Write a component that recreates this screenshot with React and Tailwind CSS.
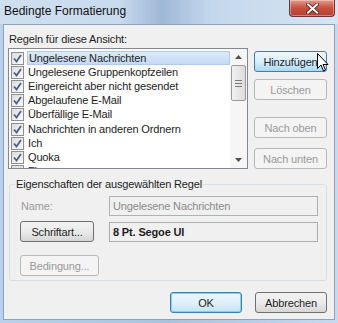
const rules = [
  "Ungelesene Nachrichten",
  "Ungelesene Gruppenkopfzeilen",
  "Eingereicht aber nicht gesendet",
  "Abgelaufene E-Mail",
  "Überfällige E-Mail",
  "Nachrichten in anderen Ordnern",
  "Ich",
  "Quoka",
  "Firma",
];

function Check() {
  return (
    <span className="flex h-[13px] w-[13px] shrink-0 items-center justify-center border border-[#8f8f8f] bg-gradient-to-br from-[#dcdcdc] to-[#fbfbfb]">
      <svg width="9" height="9" viewBox="0 0 9 9">
        <path d="M1 4.5 L3.5 7.5 L8 1" fill="none" stroke="#4d6185" strokeWidth="1.8" />
      </svg>
    </span>
  );
}

function WinButton({ children, disabled, hover, primary, className = "" }) {
  let look =
    "border-[#707070] bg-gradient-to-b from-[#f2f2f2] via-[#ebebeb] to-[#d6d6d6] text-[#1e1e1e]";
  if (disabled) look = "border-[#b5b9bc] bg-[#f4f4f4] text-[#9a9a9a]";
  if (hover)
    look = "border-[#3c7fb1] bg-gradient-to-b from-[#eaf6fd] via-[#d9f0fc] to-[#a7d9f5] text-[#1e1e1e]";
  if (primary)
    look =
      "border-[#3c7fb1] bg-gradient-to-b from-[#eaf6fd] via-[#dff1fb] to-[#c4e4f5] text-[#1e1e1e] shadow-[inset_0_0_0_1px_#7fd2f7]";
  return (
    <div
      className={`flex h-[21px] items-center justify-center rounded-[3px] border ${look} ${className}`}
    >
      {children}
    </div>
  );
}

export default function App() {
  return (
    <div className="relative h-[323px] w-[338px] overflow-hidden bg-gradient-to-r from-[#b9d1ea] via-[#a9c3df] to-[#c6d9ee] font-['Liberation_Sans',Arial,sans-serif] text-[11px] leading-[14px] tracking-[-0.15px] text-[#1e1e1e]">
      {/* title bar */}
      <div className="flex h-[24px] items-start justify-between bg-[linear-gradient(90deg,#cfdff0_0%,#c8dbef_35%,#9fb8d6_48%,#c3d7ec_62%,#d7e5f3_100%)]">
        <span className="pl-[4px] pt-[4px] text-[12px] tracking-normal text-[#111]">Bedingte Formatierung</span>
        <div className="mr-[3px] flex h-[17px] w-[46px] items-center justify-center rounded-b-[4px] border border-t-0 border-[#6d3434] bg-gradient-to-b from-[#e49a8c] via-[#c75040] to-[#b93f2e] shadow-[inset_0_0_0_1px_rgba(255,255,255,0.35)]">
          <svg width="13" height="11" viewBox="0 0 13 11">
            <path d="M2 1.5 L11 9.5 M11 1.5 L2 9.5" stroke="#4a2020" strokeWidth="3.6" strokeLinecap="square" />
            <path d="M2 1.5 L11 9.5 M11 1.5 L2 9.5" stroke="#fff" strokeWidth="2" strokeLinecap="square" />
          </svg>
        </div>
      </div>

      {/* client area */}
      <div className="mx-[3px] flex h-[296px] flex-col border border-[#8da3bd] bg-[#f0f0f0] px-[4px]">
        <div className="pl-[1px] pt-[7px]">Regeln für diese Ansicht:</div>
        <div className="mt-[2px] flex gap-[6px]">
          <div className="flex h-[121px] w-[240px] border border-[#828790] bg-white">
            <div className="flex flex-1 flex-col overflow-hidden pl-[2px] pt-[2px]">
              {rules.map((r, i) => (
                <div key={r} className="flex h-[14.2px] shrink-0 items-center gap-[3px] leading-[13px]">
                  <Check />
                  <span
                    className={`flex h-[14px] flex-1 items-center pl-[1px] ${
                      i === 0 ? "border border-[#aecbee] bg-gradient-to-b from-[#dce9f9] to-[#c4daf5]" : ""
                    }`}
                  >
                    {r}
                  </span>
                </div>
              ))}
            </div>
            {/* scrollbar */}
            <div className="flex w-[17px] flex-col items-center bg-[#f6f6f6] px-[1px]">
              <div className="flex h-[16px] items-center justify-center">
                <svg width="7" height="4" viewBox="0 0 7 4"><path d="M0 4 L3.5 0 L7 4Z" fill="#505050" /></svg>
              </div>
              <div className="flex h-[36px] w-[15px] flex-col items-center justify-center gap-[2px] rounded-[2px] border border-[#9a9a9a] bg-gradient-to-r from-[#f2f2f2] to-[#dcdcdc]">
                <span className="h-px w-[7px] bg-[#7a7a7a]" />
                <span className="h-px w-[7px] bg-[#7a7a7a]" />
                <span className="h-px w-[7px] bg-[#7a7a7a]" />
              </div>
              <div className="flex-1" />
              <div className="flex h-[16px] items-center justify-center">
                <svg width="7" height="4" viewBox="0 0 7 4"><path d="M0 0 L3.5 4 L7 0Z" fill="#505050" /></svg>
              </div>
            </div>
          </div>
          <div className="flex w-[73px] flex-col pt-[3px]">
            <div className="relative">
              <WinButton hover>Hinzufügen</WinButton>
              <svg className="absolute left-[63px] top-[2px]" width="12" height="19" viewBox="0 0 12 19">
                <path d="M0.5 0.5 L0.5 15.5 L4 12 L6.5 18 L8.5 17 L6 11.5 L11 11.5 Z" fill="#fff" stroke="#000" strokeWidth="1" />
              </svg>
            </div>
            <WinButton disabled className="mt-[7px]">Löschen</WinButton>
            <WinButton disabled className="mt-[17px]">Nach oben</WinButton>
            <WinButton disabled className="mt-[10px]">Nach unten</WinButton>
          </div>
        </div>

        {/* group box */}
        <div className="relative ml-[1px] mr-[3px] mt-[15px] h-[97px] rounded-[3px] border border-[#d5dfe5] pl-[10px] pr-[8px] pt-[11px]">
          <span className="absolute left-[5px] top-[-8px] bg-[#f0f0f0] px-[1px]">
            Eigenschaften der ausgewählten Regel
          </span>
          <div className="flex items-center">
            <span className="w-[89px] pl-[1px] text-[#9a9a9a]">Name:</span>
            <div className="flex h-[20px] flex-1 items-center border border-[#adb2b5] bg-[#f0f0f0] pl-[3px] text-[#8a8a8a]">
              Ungelesene Nachrichten
            </div>
          </div>
          <div className="mt-[5px] flex items-center">
            <WinButton className="w-[74px]">Schriftart...</WinButton>
            <div className="ml-[15px] flex h-[20px] flex-1 items-center border border-[#abadb3] bg-[#f0f0f0] pl-[3px] font-bold">
              8 Pt. Segoe UI
            </div>
          </div>
          <WinButton disabled className="mt-[13px] w-[79px]">Bedingung...</WinButton>
        </div>

        <div className="mt-[11px] flex justify-end gap-[13px] pr-[3px]">
          <WinButton primary className="w-[72px]">OK</WinButton>
          <WinButton className="w-[72px]">Abbrechen</WinButton>
        </div>
      </div>
    </div>
  );
}
